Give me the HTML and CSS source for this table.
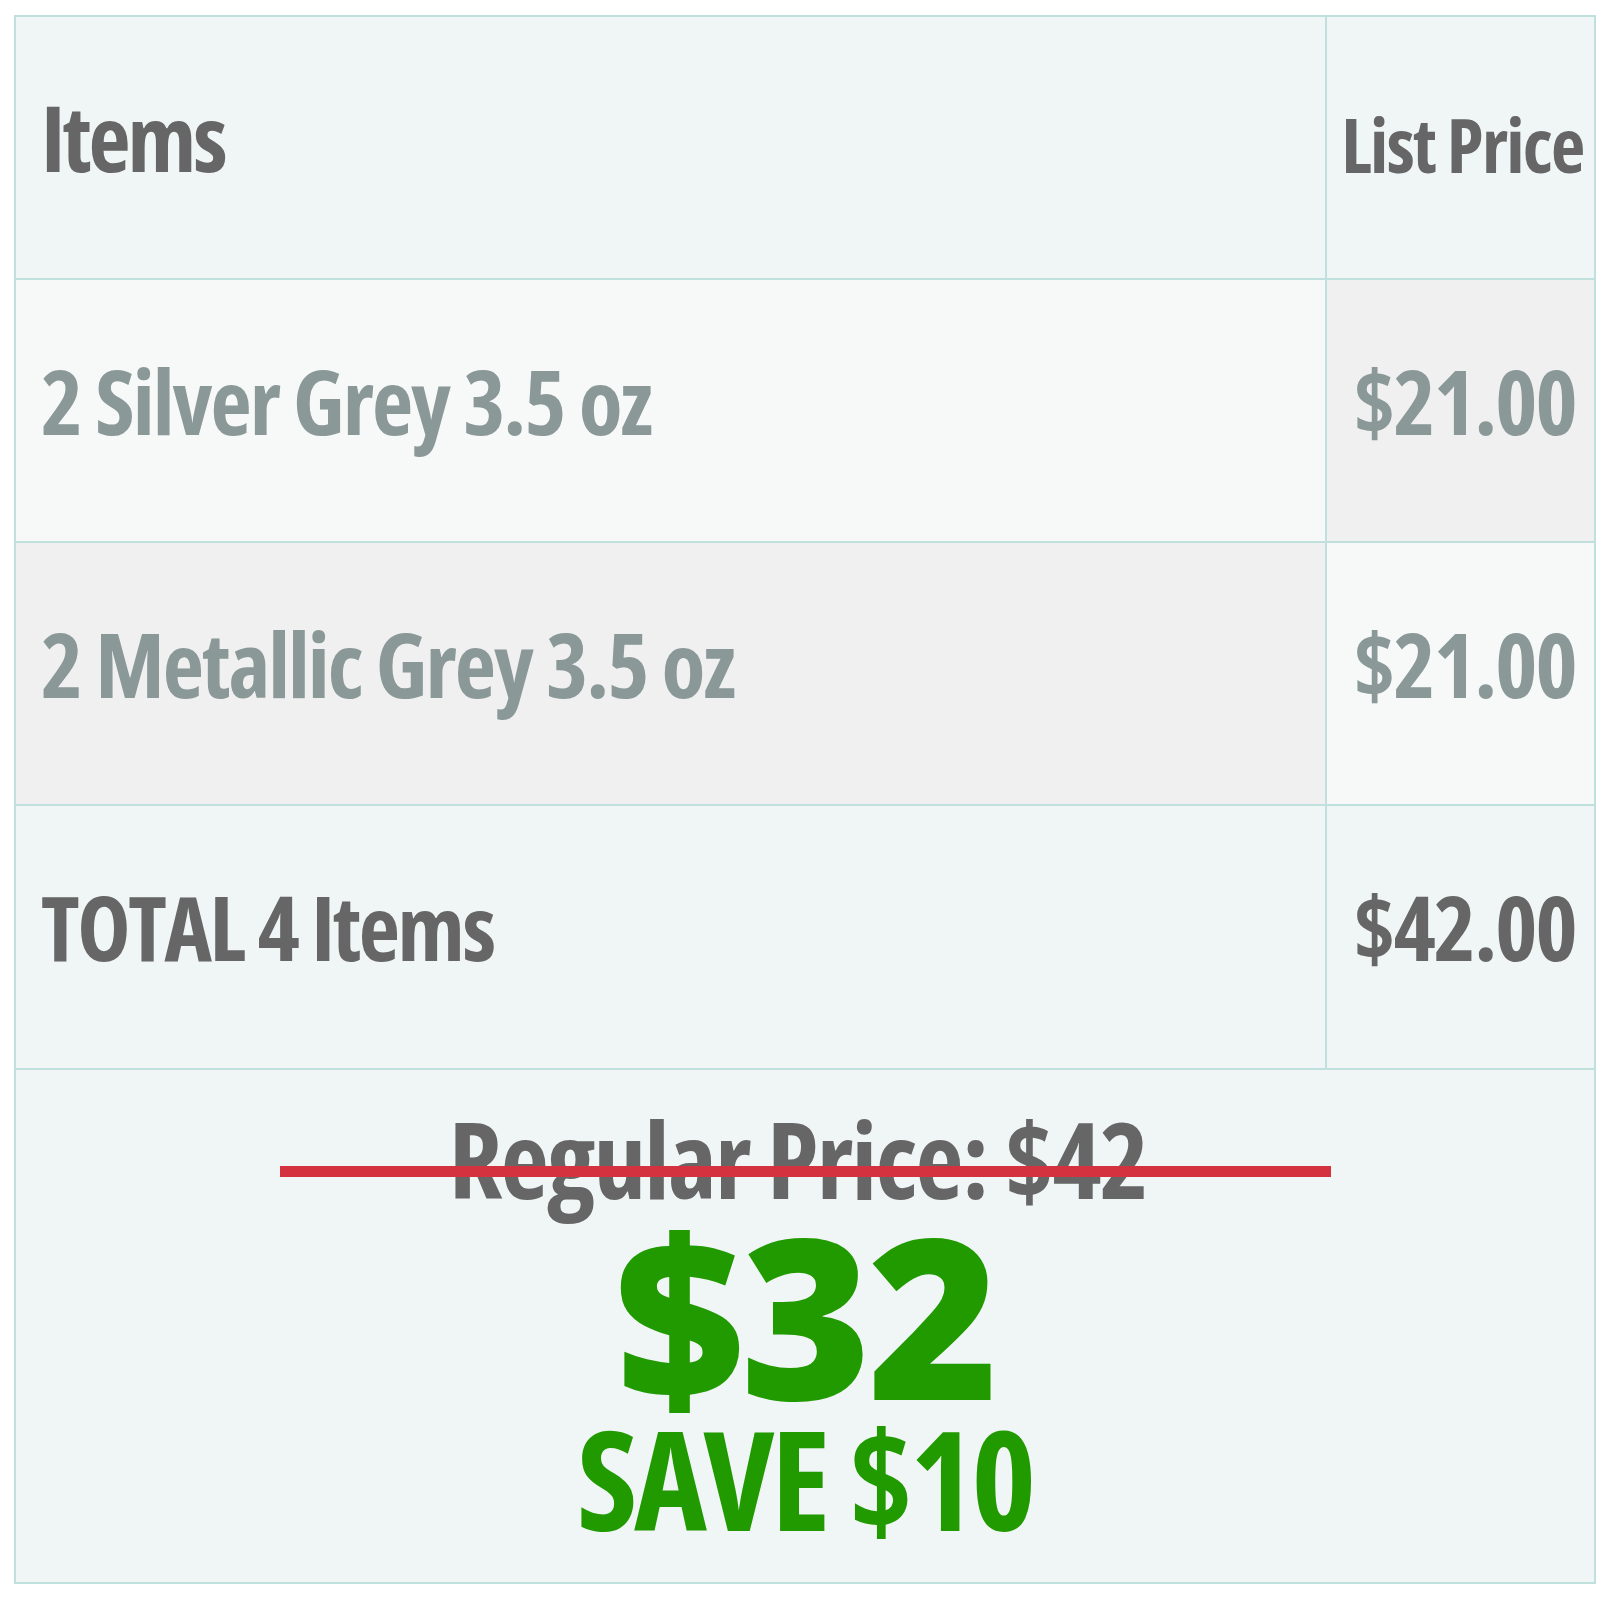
FILE: index.html
```html
<!DOCTYPE html>
<html lang="en">
<head>
<meta charset="utf-8">
<title>Price table</title>
<link rel="stylesheet" href="styles.css">
</head>
<body>
<div class="sheet">
  <div class="cell head-cell label-cell"><span class="head-items">Items</span></div>
  <div class="cell head-cell price-cell"><span class="head-price">List Price</span></div>

  <div class="cell row-light label-cell"><span class="item">2 Silver Grey 3.5 oz</span></div>
  <div class="cell row-grey price-cell"><span class="item price">$21.00</span></div>

  <div class="cell row-grey label-cell"><span class="item">2 Metallic Grey 3.5 oz</span></div>
  <div class="cell row-light price-cell"><span class="item price">$21.00</span></div>

  <div class="cell total-cell label-cell"><span class="total">TOTAL 4 Items</span></div>
  <div class="cell total-cell price-cell"><span class="total price">$42.00</span></div>

  <div class="cell summary">
    <div class="regular">Regular Price: $42</div>
    <div class="now">$32</div>
    <div class="save">SAVE $10</div>
  </div>
</div>
</body>
</html>
```
FILE: styles.css
```css
html, body {
  margin: 0;
  padding: 0;
  background: #ffffff;
}

body {
  font-family: "Open Sans", "Liberation Sans", sans-serif;
  font-weight: 700;
}

.sheet {
  margin: 15px 0 0 14px;
  width: 1582px;
  box-sizing: border-box;
  display: grid;
  grid-template-columns: 1309px 267px;
  grid-template-rows: 261px 261px 261px 262px 512px;
  gap: 2px;
  border: 2px solid #bfe0dc;
  background: #bfe0dc;
}

.cell {
  display: flex;
  align-items: center;
  box-sizing: border-box;
  white-space: nowrap;
  font-stretch: 75%;
}

.label-cell {
  padding: 0 0 22px 25px;
}

.price-cell {
  justify-content: center;
  padding: 0 0 22px 8px;
}

.head-cell { background: #f0f5f6; }
.row-light { background: #f7f8f8; }
.row-grey { background: #f0f0f0; }
.total-cell { background: #f0f5f6; }

.head-items {
  font-size: 92px;
  line-height: 1;
  color: #666666;
  letter-spacing: -3px;
}

.head-price {
  font-size: 75px;
  line-height: 1;
  color: #666666;
  letter-spacing: -1.7px;
}

.head-cell.label-cell { padding-bottom: 22px; }
.head-cell.price-cell { padding-bottom: 6px; padding-left: 4px; }

.item {
  font-size: 90px;
  line-height: 1;
  color: #8a9897;
  letter-spacing: -2px;
}

.total {
  font-size: 90px;
  line-height: 1;
  color: #666666;
  letter-spacing: -2.35px;
}

.price {
  letter-spacing: -1.9px;
}

.summary {
  grid-column: 1 / -1;
  background: #f0f5f6;
  flex-direction: column;
  justify-content: flex-start;
  padding-top: 34px;
}

.regular {
  position: relative;
  align-self: stretch;
  text-align: center;
  font-size: 105px;
  line-height: 110px;
  color: #666666;
  letter-spacing: -1.7px;
  padding-right: 14px;
}

.regular::after {
  content: "";
  position: absolute;
  left: 50%;
  top: 62px;
  width: 1051px;
  height: 11px;
  margin-left: -525px;
  background: #d5323f;
}

.now {
  font-size: 224px;
  line-height: 200px;
  font-weight: 800;
  font-stretch: 89%;
  color: #219a00;
  margin-top: 0;
  letter-spacing: -4px;
}

.save {
  font-size: 138px;
  line-height: 130px;
  color: #219a00;
  margin-top: -2px;
  letter-spacing: -3.2px;
}
```
